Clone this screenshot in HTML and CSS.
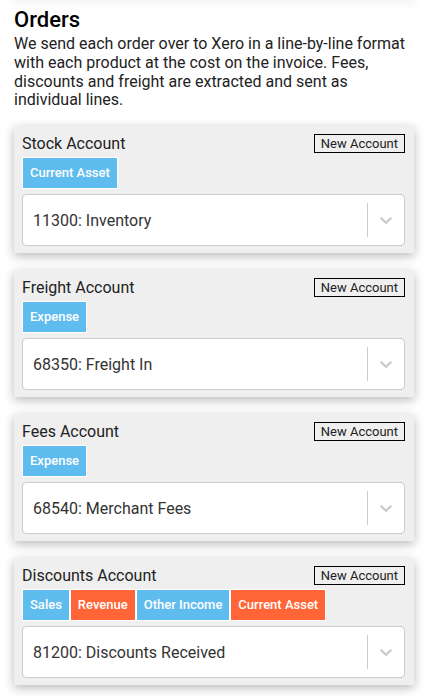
FILE: index.html
```html
<!DOCTYPE html>
<html>
<head>
<meta charset="utf-8">
<link rel="stylesheet" href="styles.css">
</head>
<body>
<div class="top-shadow"></div>
<div class="page">
  <h1 class="title">Orders</h1>
  <p class="intro">We send each order over to Xero in a line-by-line format with each product at the cost on the invoice. Fees, discounts and freight are extracted and sent as individual lines.</p>

  <div class="card">
    <div class="card-head">
      <span class="card-title">Stock Account</span>
      <button class="new-btn">New Account</button>
    </div>
    <div class="badges">
      <span class="badge blue">Current Asset</span>
    </div>
    <div class="select">
      <div class="value">11300: Inventory</div>
      <span class="sep"></span>
      <div class="indicator"><svg viewBox="0 0 20 20" width="20" height="20"><path d="M4.516 7.548c0.436-0.446 1.043-0.481 1.576 0l3.908 3.747 3.908-3.747c0.533-0.481 1.141-0.446 1.574 0 0.436 0.445 0.408 1.197 0 1.615-0.406 0.418-4.695 4.502-4.695 4.502-0.217 0.223-0.502 0.335-0.787 0.335s-0.57-0.112-0.789-0.335c0 0-4.287-4.084-4.695-4.502s-0.436-1.170 0-1.615z"/></svg></div>
    </div>
  </div>

  <div class="card">
    <div class="card-head">
      <span class="card-title">Freight Account</span>
      <button class="new-btn">New Account</button>
    </div>
    <div class="badges">
      <span class="badge blue">Expense</span>
    </div>
    <div class="select">
      <div class="value">68350: Freight In</div>
      <span class="sep"></span>
      <div class="indicator"><svg viewBox="0 0 20 20" width="20" height="20"><path d="M4.516 7.548c0.436-0.446 1.043-0.481 1.576 0l3.908 3.747 3.908-3.747c0.533-0.481 1.141-0.446 1.574 0 0.436 0.445 0.408 1.197 0 1.615-0.406 0.418-4.695 4.502-4.695 4.502-0.217 0.223-0.502 0.335-0.787 0.335s-0.57-0.112-0.789-0.335c0 0-4.287-4.084-4.695-4.502s-0.436-1.170 0-1.615z"/></svg></div>
    </div>
  </div>

  <div class="card">
    <div class="card-head">
      <span class="card-title">Fees Account</span>
      <button class="new-btn">New Account</button>
    </div>
    <div class="badges">
      <span class="badge blue">Expense</span>
    </div>
    <div class="select">
      <div class="value">68540: Merchant Fees</div>
      <span class="sep"></span>
      <div class="indicator"><svg viewBox="0 0 20 20" width="20" height="20"><path d="M4.516 7.548c0.436-0.446 1.043-0.481 1.576 0l3.908 3.747 3.908-3.747c0.533-0.481 1.141-0.446 1.574 0 0.436 0.445 0.408 1.197 0 1.615-0.406 0.418-4.695 4.502-4.695 4.502-0.217 0.223-0.502 0.335-0.787 0.335s-0.57-0.112-0.789-0.335c0 0-4.287-4.084-4.695-4.502s-0.436-1.170 0-1.615z"/></svg></div>
    </div>
  </div>

  <div class="card">
    <div class="card-head">
      <span class="card-title">Discounts Account</span>
      <button class="new-btn">New Account</button>
    </div>
    <div class="badges">
      <span class="badge blue">Sales</span>
      <span class="badge orange">Revenue</span>
      <span class="badge blue">Other Income</span>
      <span class="badge orange">Current Asset</span>
    </div>
    <div class="select">
      <div class="value">81200: Discounts Received</div>
      <span class="sep"></span>
      <div class="indicator"><svg viewBox="0 0 20 20" width="20" height="20"><path d="M4.516 7.548c0.436-0.446 1.043-0.481 1.576 0l3.908 3.747 3.908-3.747c0.533-0.481 1.141-0.446 1.574 0 0.436 0.445 0.408 1.197 0 1.615-0.406 0.418-4.695 4.502-4.695 4.502-0.217 0.223-0.502 0.335-0.787 0.335s-0.57-0.112-0.789-0.335c0 0-4.287-4.084-4.695-4.502s-0.436-1.170 0-1.615z"/></svg></div>
    </div>
  </div>
</div>
</body>
</html>
```

FILE: styles.css
```css
html, body {
  margin: 0;
  padding: 0;
  background: #fff;
  font-family: Roboto, "Liberation Sans", Arial, sans-serif;
  color: #222;
  overflow: hidden;
}
.top-shadow {
  height: 0;
  margin: 0 14px;
  box-shadow: 0 0 8px 2px rgba(0,0,0,0.10);
}
.page {
  padding: 7px 14px 0 14px;
  width: 400px;
}
.title {
  margin: 0;
  font-size: 22px;
  font-weight: 500;
  line-height: 26px;
  color: #000;
}
.intro {
  margin: 2px 0 16px 0;
  font-size: 16px;
  line-height: 18.75px;
  color: #222;
}
.card {
  background: #efefef;
  box-shadow: 0 3px 10px rgba(0,0,0,0.28);
  padding: 8px 8px 7px 8px;
  margin-bottom: 17px;
  display: flex;
  flex-direction: column;
}
.card-head {
  display: flex;
  justify-content: space-between;
  align-items: flex-start;
  height: 19px;
}
.card-title {
  font-size: 16px;
  line-height: 19px;
  color: #222;
}
.new-btn {
  font-family: Roboto, "Liberation Sans", Arial, sans-serif;
  font-size: 13px;
  line-height: 16px;
  color: #222;
  background: transparent;
  border: 1px solid #000;
  padding: 0 6px;
  margin: 0 1px 0 0;
  height: 19px;
}
.badges {
  display: flex;
  margin-top: 4px;
}
.badge {
  height: 30px;
  line-height: 30px;
  padding: 0 7px;
  border: 1px solid #fff;
  color: #fff;
  font-size: 13px;
  font-weight: 500;
}
.badge.blue { background: #5fbcee; }
.badge.orange { background: #ff6536; }
.select {
  margin-top: 5px;
  margin-right: 1px;
  height: 50px;
  background: #fff;
  border: 1px solid #ccc;
  border-radius: 4px;
  display: flex;
  align-items: center;
}
.value {
  flex: 1;
  padding: 0 10px;
  font-size: 16px;
  color: #333;
}
.sep {
  width: 1px;
  height: 34px;
  background: #ccc;
}
.indicator {
  padding: 8px;
  display: flex;
}
.indicator svg {
  fill: #ccc;
}
```
